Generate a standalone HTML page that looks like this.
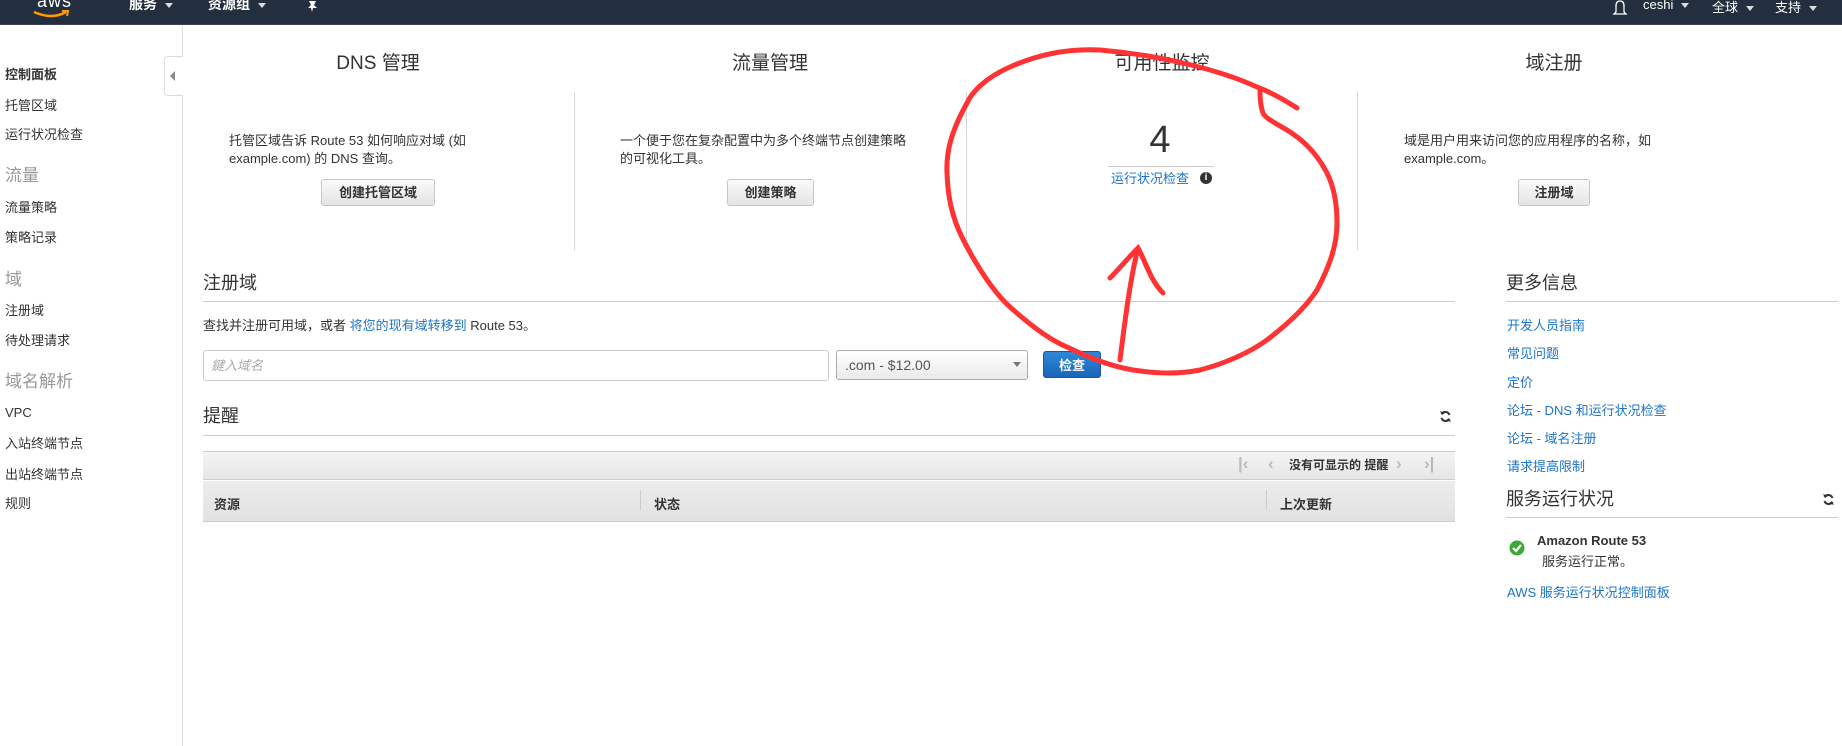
<!DOCTYPE html>
<html><head><meta charset="utf-8"><style>
*{margin:0;padding:0;box-sizing:border-box}
body{width:1842px;height:746px;position:relative;overflow:hidden;background:#fff;font-family:"Liberation Sans","Noto Sans CJK SC",sans-serif;color:#333;font-size:13px}
.a{position:absolute;white-space:nowrap}
.hdr{position:absolute;left:0;top:0;width:1842px;height:25px;background:#232f3e;border-bottom:1px solid #3b4552}
.hdr .a{color:#fff;font-size:14px;font-weight:bold;top:-6px}
.car{display:inline-block;margin-left:8px;width:0;height:0;border-left:4px solid transparent;border-right:4px solid transparent;border-top:5px solid #ddd;vertical-align:middle}
.side .a{left:5px;font-size:13px;line-height:18px;color:#333}
.side .g{color:#999;font-size:17px;line-height:22px}
.ttl{font-size:19px;color:#333;text-align:center;width:392px;line-height:24px}
.p{font-size:13px;line-height:18px;color:#333;white-space:normal}
.btn{position:absolute;height:27px;border:1px solid #c6c6c6;border-radius:3px;background:linear-gradient(#fafafa,#e4e4e4);font-weight:bold;font-size:13px;text-align:center;line-height:25px;color:#333}
.vl{position:absolute;width:1px;background:#d5d5d5;top:92px;height:158px}
.lnk{color:#1e74c6}
.h2{font-size:18px;line-height:22px;color:#333}
.hl{position:absolute;height:1px;background:#ccc}
.pg{position:absolute;top:455px;color:#bbb;font-size:17px;font-weight:bold;line-height:18px}
</style></head><body>
<div class="hdr">
  <div class="a" style="left:37px;top:-9px;font-size:18px;font-weight:normal;color:#fff;letter-spacing:1px">aws</div>
  <svg class="a" style="left:32px;top:9px" width="40" height="10"><path d="M2 3 Q20 11 34 3" stroke="#f90" stroke-width="2.5" fill="none"/><path d="M30 2 L36 2 L35 7" stroke="#f90" stroke-width="2" fill="none"/></svg>
  <div class="a" style="left:129px">服务<span class="car"></span></div>
  <div class="a" style="left:208px">资源组<span class="car"></span></div>
  <svg class="a" style="left:306px;top:0" width="14" height="12"><path d="M3 1 L10 1 L8 5 L11 8 L7 8 L6 12 L5 8 L2 8 L5 5 Z" fill="#fff"/></svg>
  <svg class="a" style="left:1612px;top:0" width="16" height="16"><path d="M4 12 L4 6 Q4 1 8 1 Q12 1 12 6 L12 12 L14 14 L2 14 Z" stroke="#fff" stroke-width="1.3" fill="none"/></svg>
  <div class="a" style="left:1643px;font-weight:normal;font-size:13px;top:-3px">ceshi<span class="car"></span></div>
  <div class="a" style="left:1712px;font-weight:normal;font-size:13px;top:-3px">全球<span class="car"></span></div>
  <div class="a" style="left:1775px;font-weight:normal;font-size:13px;top:-3px">支持<span class="car"></span></div>
</div>
<div class="a" style="left:182px;top:26px;width:1px;height:720px;background:#ddd"></div>
<div class="a" style="left:164px;top:56px;width:19px;height:40px;border:1px solid #ddd;border-right:none;border-radius:4px 0 0 4px;background:#fff"></div>
<div class="a" style="left:170px;top:71px;width:0;height:0;border-top:5px solid transparent;border-bottom:5px solid transparent;border-right:5px solid #888"></div>
<div class="side">
  <div class="a" style="top:66px;font-weight:bold">控制面板</div>
  <div class="a" style="top:97px">托管区域</div>
  <div class="a" style="top:126px">运行状况检查</div>
  <div class="a g" style="top:165px">流量</div>
  <div class="a" style="top:199px">流量策略</div>
  <div class="a" style="top:229px">策略记录</div>
  <div class="a g" style="top:269px">域</div>
  <div class="a" style="top:302px">注册域</div>
  <div class="a" style="top:332px">待处理请求</div>
  <div class="a g" style="top:371px">域名解析</div>
  <div class="a" style="top:404px">VPC</div>
  <div class="a" style="top:435px">入站终端节点</div>
  <div class="a" style="top:466px">出站终端节点</div>
  <div class="a" style="top:495px">规则</div>
</div>
<div class="a ttl" style="left:182px;top:52px">DNS 管理</div>
<div class="a ttl" style="left:574px;top:52px">流量管理</div>
<div class="a ttl" style="left:966px;top:52px">可用性监控</div>
<div class="a ttl" style="left:1358px;top:52px">域注册</div>
<div class="vl" style="left:574px"></div><div class="vl" style="left:966px"></div><div class="vl" style="left:1357px"></div>
<div class="a p" style="left:229px;top:132px;width:260px">托管区域告诉 Route 53 如何响应对域 (如 example.com) 的 DNS 查询。</div>
<div class="btn" style="left:321px;top:179px;width:114px">创建托管区域</div>
<div class="a p" style="left:620px;top:132px;width:298px">一个便于您在复杂配置中为多个终端节点创建策略的可视化工具。</div>
<div class="btn" style="left:727px;top:179px;width:87px">创建策略</div>
<div class="a" style="left:1110px;top:118px;width:100px;text-align:center;font-size:38px;line-height:44px;color:#333">4</div>
<div class="a" style="left:1108px;top:166px;width:106px;height:1px;background:#ccc"></div>
<div class="a lnk" style="left:1111px;top:170px;line-height:17px">运行状况检查</div>
<div class="a" style="left:1200px;top:172px;width:12px;height:12px;border-radius:6px;background:#333;color:#fff;font-size:10px;font-weight:bold;text-align:center;line-height:12px">i</div>
<div class="a p" style="left:1404px;top:132px;width:300px">域是用户用来访问您的应用程序的名称，如 example.com。</div>
<div class="btn" style="left:1518px;top:179px;width:72px">注册域</div>

<div class="a h2" style="left:203px;top:272px">注册域</div>
<div class="hl" style="left:203px;top:301px;width:1252px"></div>
<div class="a" style="left:203px;top:317px;line-height:17px">查找并注册可用域，或者 <span class="lnk">将您的现有域转移到</span> Route 53。</div>
<div class="a" style="left:203px;top:350px;width:626px;height:31px;border:1px solid #ccc;border-radius:3px;font-style:italic;color:#aaa;padding:7px 7px;line-height:15px">鍵入域名</div>
<div class="a" style="left:836px;top:350px;width:192px;height:30px;border:1px solid #aaa;border-radius:3px;background:linear-gradient(#fff,#eaeaea);color:#555;padding:0 8px;line-height:28px;font-size:14px">.com - $12.00</div>
<div class="a" style="left:1013px;top:362px;width:0;height:0;border-left:4px solid transparent;border-right:4px solid transparent;border-top:5px solid #777"></div>
<div class="a" style="left:1043px;top:351px;width:58px;height:27px;border-radius:3px;background:linear-gradient(#2f86d8,#1a66b8);color:#fff;font-weight:bold;text-align:center;line-height:27px;border:1px solid #1559a3">检查</div>

<div class="a h2" style="left:203px;top:405px">提醒</div>
<svg class="a" style="left:1439px;top:410px" width="13" height="13"><path d="M10.5 5 A4.5 4.5 0 0 0 2.5 4 M2.5 8 A4.5 4.5 0 0 0 10.5 9" stroke="#333" stroke-width="2" fill="none"/><path d="M1 1 L3 5 L6 3Z M12 12 L10 8 L7 10Z" fill="#333"/></svg>
<div class="hl" style="left:203px;top:435px;width:1252px"></div>
<div class="a" style="left:203px;top:451px;width:1252px;height:29px;background:linear-gradient(#f4f4f4,#e6e6e6);border-top:1px solid #ccc;border-bottom:1px solid #ccc"></div>
<div class="pg" style="left:1238px">|‹</div>
<div class="pg" style="left:1268px">‹</div>
<div class="a" style="left:1289px;top:457px;font-weight:bold;font-size:12px;line-height:16px">没有可显示的 提醒</div>
<div class="pg" style="left:1396px">›</div>
<div class="pg" style="left:1424px">›|</div>
<div class="a" style="left:203px;top:481px;width:1252px;height:41px;background:linear-gradient(#ececec,#e2e2e2);border-bottom:1px solid #ccc"></div>
<div class="a" style="left:214px;top:494px;font-weight:bold">资源</div>
<div class="a" style="left:640px;top:490px;width:1px;height:20px;background:#fff;border-left:1px solid #ccc"></div>
<div class="a" style="left:654px;top:494px;font-weight:bold">状态</div>
<div class="a" style="left:1266px;top:490px;width:1px;height:20px;border-left:1px solid #ccc"></div>
<div class="a" style="left:1280px;top:494px;font-weight:bold">上次更新</div>

<div class="a h2" style="left:1506px;top:272px">更多信息</div>
<div class="hl" style="left:1506px;top:301px;width:332px"></div>
<div class="a lnk" style="left:1507px;top:315px">开发人员指南</div>
<div class="a lnk" style="left:1507px;top:343px">常见问题</div>
<div class="a lnk" style="left:1507px;top:372px">定价</div>
<div class="a lnk" style="left:1507px;top:400px">论坛 - DNS 和运行状况检查</div>
<div class="a lnk" style="left:1507px;top:428px">论坛 - 域名注册</div>
<div class="a lnk" style="left:1507px;top:456px">请求提高限制</div>
<div class="a h2" style="left:1506px;top:488px">服务运行状况</div>
<svg class="a" style="left:1822px;top:493px" width="13" height="13"><path d="M10.5 5 A4.5 4.5 0 0 0 2.5 4 M2.5 8 A4.5 4.5 0 0 0 10.5 9" stroke="#333" stroke-width="2" fill="none"/><path d="M1 1 L3 5 L6 3Z M12 12 L10 8 L7 10Z" fill="#333"/></svg>
<div class="hl" style="left:1506px;top:517px;width:332px"></div>
<svg class="a" style="left:1509px;top:540px" width="16" height="16"><circle cx="8" cy="8" r="7.5" fill="#3aa935"/><path d="M4 8 L7 11 L12 5" stroke="#fff" stroke-width="2.2" fill="none"/></svg>
<div class="a" style="left:1537px;top:533px;font-weight:bold;font-size:13px">Amazon Route 53</div>
<div class="a" style="left:1542px;top:551px">服务运行正常。</div>
<div class="a lnk" style="left:1507px;top:582px">AWS 服务运行状况控制面板</div>

<svg class="a" style="left:0;top:0" width="1842" height="746"><path d="M1297 108 C1280 97 1265 90 1257 87 C1220 70 1160 55 1100 50 C1060 48 1030 58 1010 67 C985 78 972 92 967 103 C952 130 946 150 947 173 C948 205 955 225 967 247 C985 280 1000 298 1010 307 C1030 325 1050 340 1067 347 C1090 358 1110 366 1133 370 C1160 374 1180 374 1200 370 C1230 362 1250 352 1267 340 C1290 322 1305 308 1317 290 C1330 265 1337 245 1337 223 C1337 200 1333 185 1327 173 C1315 150 1300 138 1287 130 C1275 123 1265 118 1263 113 C1260 105 1260 95 1260 90" stroke="#ff3333" stroke-width="5" fill="none" stroke-linecap="round"/><path d="M1120 360 C1125 320 1130 280 1138 248 M1110 278 C1120 268 1128 258 1138 248 C1145 260 1150 280 1163 293" stroke="#ff3333" stroke-width="5" fill="none" stroke-linecap="round"/></svg>
</body></html>
